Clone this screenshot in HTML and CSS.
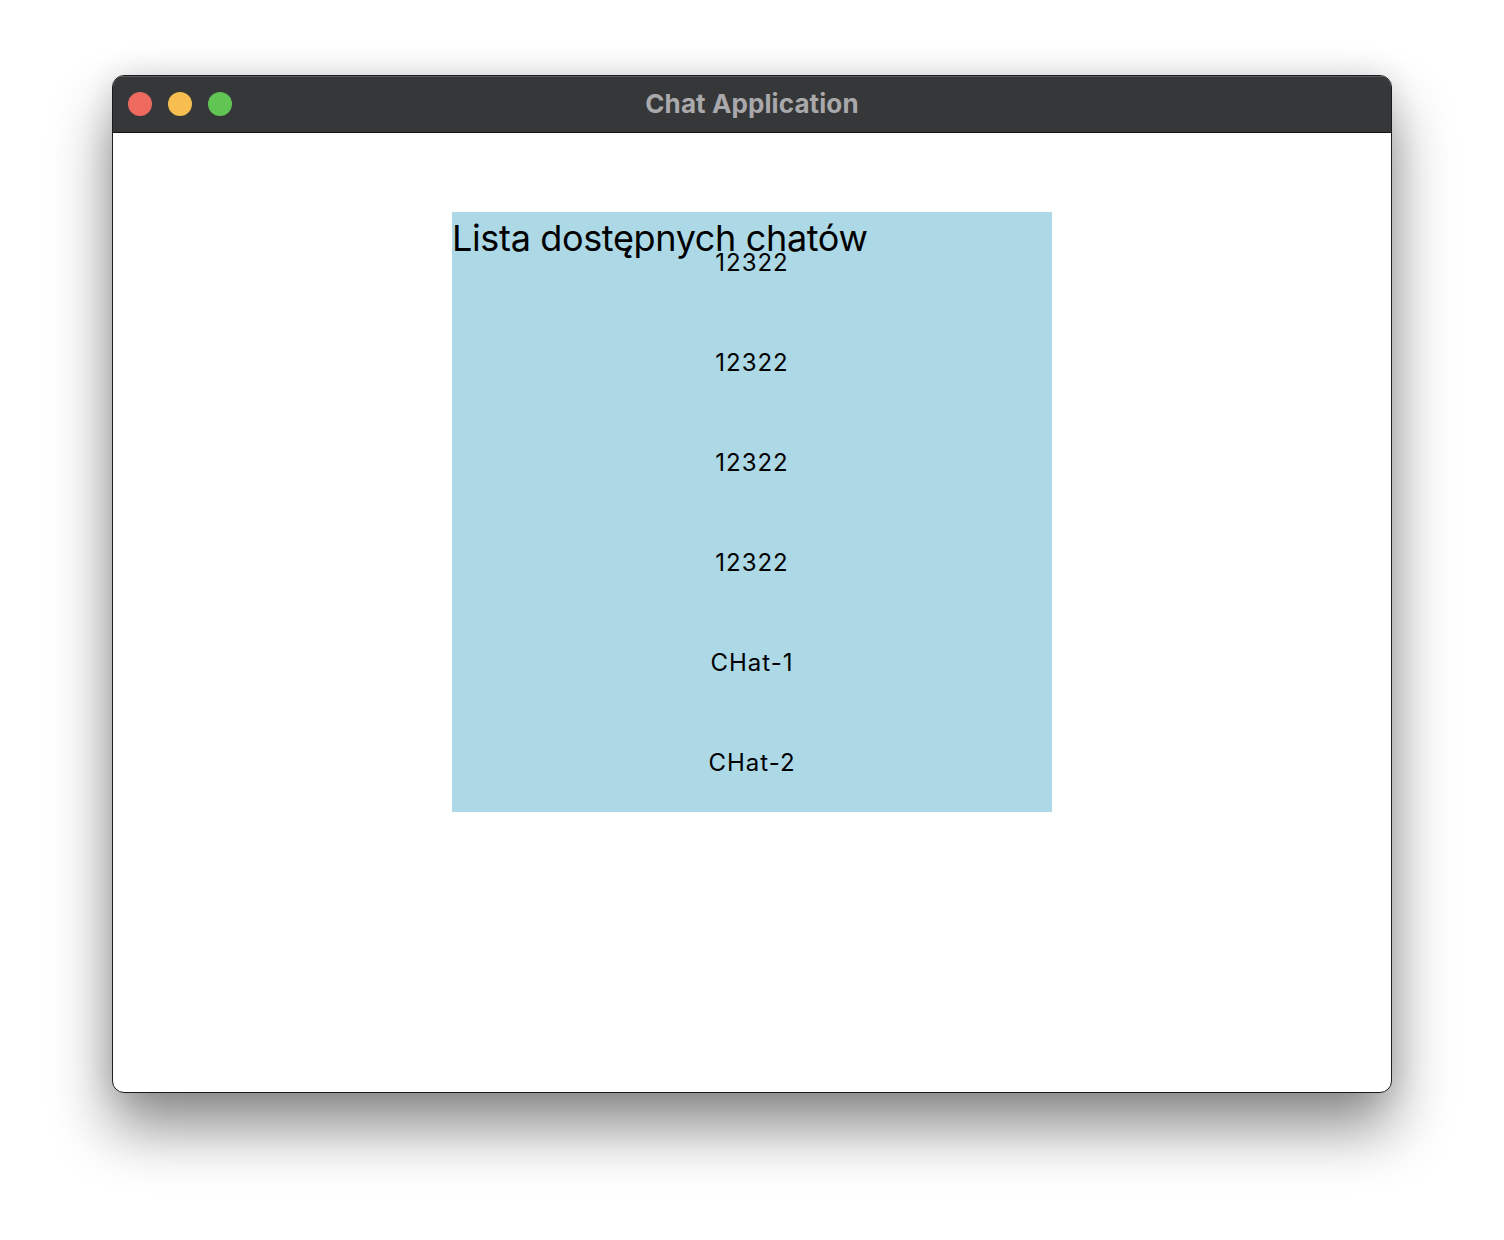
FILE: index.html
```html
<!DOCTYPE html>
<html>
<head>
<meta charset="utf-8">
<link rel="stylesheet" href="styles.css">
</head>
<body>
<div class="window">
  <div class="titlebar">
    <div class="lights">
      <span class="light red"></span>
      <span class="light yellow"></span>
      <span class="light green"></span>
    </div>
    <div class="title">Chat Application</div>
  </div>
  <div class="content">
    <div class="chatlist">
      <h1 class="heading">Lista dostępnych chatów</h1>
      <div class="item">12322</div>
      <div class="item">12322</div>
      <div class="item">12322</div>
      <div class="item">12322</div>
      <div class="item">CHat-1</div>
      <div class="item">CHat-2</div>
    </div>
  </div>
</div>
</body>
</html>
```

FILE: styles.css
```css
html, body {
  margin: 0;
  padding: 0;
  background: #ffffff;
}
body {
  width: 1504px;
  height: 1240px;
  overflow: hidden;
  font-family: Inter, "Noto Sans", sans-serif;
}
.window {
  margin: 75px 0 0 112px;
  width: 1280px;
  height: 1018px;
  box-sizing: border-box;
  border: 1px solid #1c1c1e;
  border-radius: 12px;
  overflow: hidden;
  background: #fff;
  box-shadow: 0 35px 60px rgba(0, 0, 0, 0.45), 0 0 30px rgba(0,0,0,0.12);
  display: flex;
  flex-direction: column;
}
.titlebar {
  height: 57px;
  flex: none;
  background: #363739;
  border-bottom: 1px solid #111;
  border-top: 1px solid #5a5b5e;
  box-sizing: border-box;
  position: relative;
  display: flex;
  align-items: center;
  justify-content: center;
}
.lights {
  position: absolute;
  left: 15px;
  top: 15px;
  display: flex;
  gap: 16px;
}
.light {
  width: 24px;
  height: 24px;
  border-radius: 50%;
  display: block;
}
.red { background: #ee6a5f; }
.yellow { background: #f5be4f; }
.green { background: #61c554; }
.title {
  color: #a9a9ab;
  font-weight: 700;
  font-size: 26px;
  letter-spacing: 0.1px;
  margin-top: -3px;
}
.content {
  flex: 1;
  display: flex;
  justify-content: center;
  padding-top: 79px;
}
.chatlist {
  position: relative;
  width: 600px;
  height: 600px;
  background: #add8e6;
  display: flex;
  flex-direction: column;
}
.heading {
  position: absolute;
  left: 0;
  top: 5px;
  margin: 0;
  font-size: 36px;
  font-weight: 400;
  color: #000;
  letter-spacing: -0.35px;
  line-height: 1.2;
}
.item {
  height: 100px;
  display: flex;
  align-items: center;
  justify-content: center;
  font-size: 24px;
  letter-spacing: 1px;
  color: #000;
}
```
